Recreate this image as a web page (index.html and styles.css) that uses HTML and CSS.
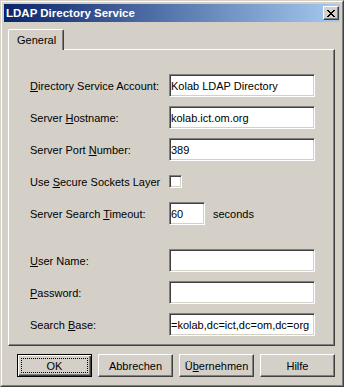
FILE: index.html
```html
<!DOCTYPE html>
<html lang="de">
<head>
    <meta charset="UTF-8">
    <title>LDAP Directory Service</title>
    <link rel="stylesheet" href="styles.css">
</head>
<body>
    <div class="window">
        <div class="frame">
            <div class="titlebar">
                <span class="title">LDAP Directory Service</span>
                <span class="close-btn">
                    <svg width="8" height="7" viewBox="0 0 8 7" shape-rendering="crispEdges">
                        <path d="M0 0h2v1H0z M6 0h2v1H6z M1 1h2v1H1z M5 1h2v1H5z M2 2h4v1H2z M3 3h2v1H3z M2 4h4v1H2z M1 5h2v1H1z M5 5h2v1H5z M0 6h2v1H0z M6 6h2v1H6z" fill="#000"/>
                    </svg>
                </span>
            </div>
            <div class="content">
                <div class="tabs">
                    <div class="tab">General</div>
                </div>
                <div class="panel">
                    <div class="row">
                        <label class="label"><u>D</u>irectory Service Account:</label>
                        <input class="field" type="text" value="Kolab LDAP Directory">
                    </div>
                    <div class="row">
                        <label class="label">Server <u>H</u>ostname:</label>
                        <input class="field" type="text" value="kolab.ict.om.org">
                    </div>
                    <div class="row">
                        <label class="label">Server Port <u>N</u>umber:</label>
                        <input class="field" type="text" value="389">
                    </div>
                    <div class="row">
                        <label class="label">Use <u>S</u>ecure Sockets Layer</label>
                        <span class="checkbox"></span>
                    </div>
                    <div class="row">
                        <label class="label">Server Search <u>T</u>imeout:</label>
                        <input class="field short" type="text" value="60">
                        <span class="unit">seconds</span>
                    </div>
                    <div class="row spaced">
                        <label class="label"><u>U</u>ser Name:</label>
                        <input class="field" type="text" value="">
                    </div>
                    <div class="row">
                        <label class="label"><u>P</u>assword:</label>
                        <input class="field" type="password" value="">
                    </div>
                    <div class="row">
                        <label class="label">Search <u>B</u>ase:</label>
                        <input class="field" type="text" value="=kolab,dc=ict,dc=om,dc=org">
                    </div>
                </div>
                <div class="buttons">
                    <button class="btn default"><span class="focus">OK</span></button>
                    <button class="btn">Abbrechen</button>
                    <button class="btn">Ü<u>b</u>ernehmen</button>
                    <button class="btn">Hilfe</button>
                </div>
            </div>
        </div>
    </div>
</body>
</html>
```

FILE: styles.css
```css
body {
    margin: 0;
    padding: 0;
    background-color: #d4d0c8;
    font-family: "Liberation Sans", Arial, sans-serif;
    font-size: 11px;
    color: #000000;
}
.window {
    width: 344px;
    height: 387px;
    box-sizing: border-box;
    background-color: #d4d0c8;
    border: 1px solid;
    border-color: #d4d0c8 #404040 #404040 #d4d0c8;
}
.frame {
    height: 100%;
    box-sizing: border-box;
    border: 1px solid;
    border-color: #ffffff #808080 #808080 #ffffff;
    padding: 2px;
    display: flex;
    flex-direction: column;
}
.titlebar {
    height: 18px;
    display: flex;
    align-items: center;
    justify-content: space-between;
    padding: 0 2px;
    background: linear-gradient(to right, #0a246a, #a6caf0);
}
.title {
    color: #ffffff;
    font-weight: bold;
    font-size: 11.5px;
}
.close-btn {
    width: 16px;
    height: 14px;
    box-sizing: border-box;
    display: flex;
    align-items: center;
    justify-content: center;
    background-color: #d4d0c8;
    border: 1px solid;
    border-color: #ffffff #404040 #404040 #ffffff;
    box-shadow: inset -1px -1px #808080;
    margin-right: -1px;
}
.content {
    padding: 0 5px 0 4px;
}
.tabs {
    display: flex;
    margin-top: 7px;
}
.tab {
    position: relative;
    z-index: 1;
    height: 21px;
    box-sizing: border-box;
    padding: 0 7px 0 8px;
    margin-bottom: -1px;
    display: flex;
    align-items: center;
    background-color: #d4d0c8;
    border: 1px solid;
    border-bottom: none;
    border-color: #ffffff #404040 #ffffff #ffffff;
    border-top-left-radius: 2px;
    border-top-right-radius: 2px;
    box-shadow: inset -1px 0 #808080;
}
.panel {
    height: 297px;
    box-sizing: border-box;
    border: 1px solid;
    border-color: #ffffff #404040 #404040 #ffffff;
    box-shadow: inset -1px -1px #808080;
    padding: 24px 19px 0 21px;
    display: flex;
    flex-direction: column;
    gap: 9px;
}
.row {
    height: 23px;
    display: flex;
    align-items: center;
}
.row.spaced {
    margin-top: 15px;
}
.label {
    width: 139px;
    flex-shrink: 0;
}
.field {
    width: 146px;
    height: 23px;
    box-sizing: border-box;
    margin: 0;
    padding: 0 1px;
    font-family: "Liberation Sans", Arial, sans-serif;
    font-size: 11px;
    color: #000000;
    background-color: #ffffff;
    border: 1px solid;
    border-color: #808080 #ffffff #ffffff #808080;
    box-shadow: inset 1px 1px #404040, inset -1px -1px #d4d0c8;
    outline: none;
}
.field.short {
    width: 36px;
}
.unit {
    margin-left: 8px;
}
.checkbox {
    width: 13px;
    height: 13px;
    box-sizing: border-box;
    background-color: #ffffff;
    border: 1px solid;
    border-color: #808080 #ffffff #ffffff #808080;
    box-shadow: inset 1px 1px #404040, inset -1px -1px #d4d0c8;
}
.buttons {
    display: flex;
    justify-content: flex-end;
    gap: 6px;
    margin-top: 8px;
}
.btn {
    width: 75px;
    height: 23px;
    box-sizing: border-box;
    margin: 0;
    padding: 0;
    font-family: "Liberation Sans", Arial, sans-serif;
    font-size: 11px;
    color: #000000;
    background-color: #d4d0c8;
    border: 1px solid;
    border-color: #ffffff #404040 #404040 #ffffff;
    box-shadow: inset -1px -1px #808080;
    display: flex;
    align-items: center;
    justify-content: center;
}
.btn.default {
    border-color: #000000;
    box-shadow: inset 1px 1px #ffffff, inset -1px -1px #404040, inset -2px -2px #808080;
    padding: 3px;
}
.focus {
    flex: 1;
    align-self: stretch;
    display: flex;
    align-items: center;
    justify-content: center;
    border: 1px dotted #000000;
}
```
